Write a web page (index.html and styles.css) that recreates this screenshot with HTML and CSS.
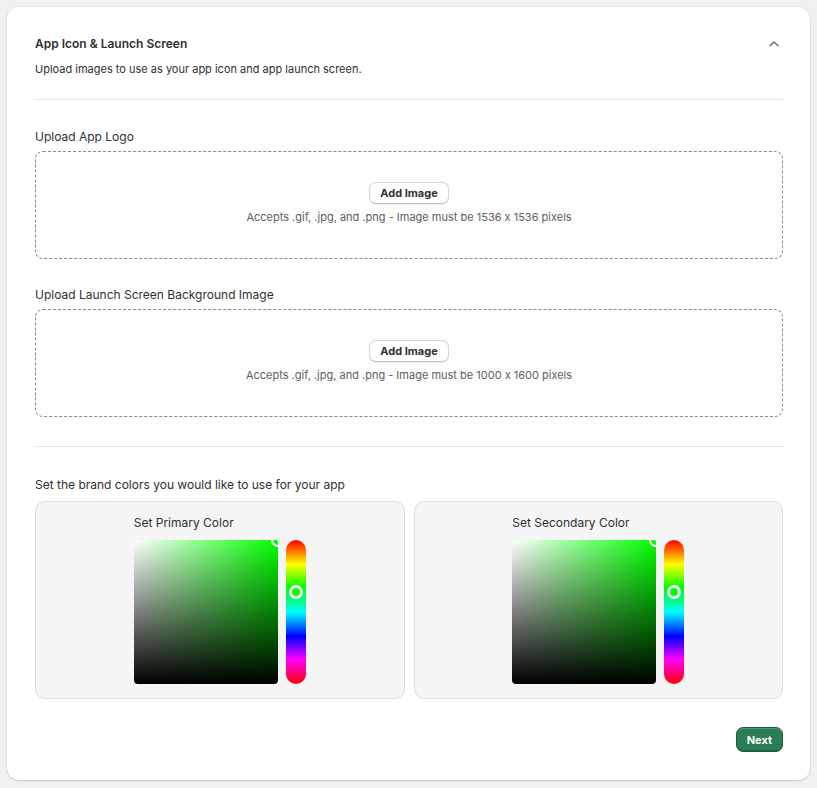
FILE: index.html
```html
<!DOCTYPE html>
<html>
<head>
<meta charset="utf-8">
<link rel="stylesheet" href="styles.css">
</head>
<body>
<div class="card">
  <div class="header">
    <div class="title-row">
      <h2 class="title">App Icon &amp; Launch Screen</h2>
      <svg class="chevron" width="12" height="12" viewBox="0 0 12 12"><path d="M2 7.8 L6 4 L10 7.8" fill="none" stroke="#6b6b6b" stroke-width="1.5" stroke-linecap="round" stroke-linejoin="round"/></svg>
    </div>
    <p class="subtitle">Upload images to use as your app icon and app launch screen.</p>
  </div>

  <div class="section uploads">
    <div class="field">
      <div class="label">Upload App Logo</div>
      <div class="dropzone">
        <button class="btn">Add Image</button>
        <div class="hint">Accepts .gif, .jpg, and .png - Image must be 1536 x 1536 pixels</div>
      </div>
    </div>
    <div class="field">
      <div class="label">Upload Launch Screen Background Image</div>
      <div class="dropzone">
        <button class="btn">Add Image</button>
        <div class="hint">Accepts .gif, .jpg, and .png - Image must be 1000 x 1600 pixels</div>
      </div>
    </div>
  </div>

  <div class="section colors">
    <div class="label">Set the brand colors you would like to use for your app</div>
    <div class="color-grid">
      <div class="color-card">
        <div class="picker">
          <div class="picker-label">Set Primary Color</div>
          <div class="picker-body">
            <div class="sat"><span class="sat-handle"></span></div>
            <div class="hue"><span class="hue-handle"></span></div>
          </div>
        </div>
      </div>
      <div class="color-card">
        <div class="picker">
          <div class="picker-label">Set Secondary Color</div>
          <div class="picker-body">
            <div class="sat"><span class="sat-handle"></span></div>
            <div class="hue"><span class="hue-handle"></span></div>
          </div>
        </div>
      </div>
    </div>
  </div>

  <div class="footer">
    <button class="btn-primary">Next</button>
  </div>
</div>
</body>
</html>
```

FILE: styles.css
```css
* { box-sizing: border-box; }
html, body { margin: 0; }
body {
  background: #f1f1f1;
  padding: 7px 7px 8px 7px;
  font-family: Inter, "Noto Sans", "Liberation Sans", sans-serif;
  font-size: 12px;
  color: #303030;
  line-height: 20px;
  font-feature-settings: "calt" 0;
}
.card {
  background: #ffffff;
  border-radius: 12px;
  box-shadow: 0 1px 0 rgba(0,0,0,0.07), 0 0 0 1px rgba(0,0,0,0.04), 0 1px 3px rgba(0,0,0,0.08);
  padding: 27px 27px 28px 28px;
}
.header {
  padding-bottom: 20px;
  border-bottom: 1px solid #e3e3e3;
}
.title-row {
  display: flex;
  justify-content: space-between;
  align-items: center;
}
.title {
  margin: 0;
  font-size: 12px;
  font-weight: 600;
  line-height: 20px;
}
.chevron { margin-right: 3px; }
.subtitle {
  margin: 5px 0 0 0;
  font-size: 11px;
  line-height: 20px;
}
.uploads {
  padding: 27px 0 29px 0;
  border-bottom: 1px solid #e3e3e3;
  display: flex;
  flex-direction: column;
  gap: 26px;
}
.label { line-height: 20px; margin-bottom: 4px; }
.dropzone {
  border: 1px dashed #8a8a8a;
  border-radius: 8px;
  background: #fdfdfd;
  height: 108px;
  display: flex;
  flex-direction: column;
  align-items: center;
  justify-content: flex-start;
  gap: 5px;
  padding-top: 30px;
}
.btn {
  font-family: inherit;
  font-size: 11px;
  font-weight: 650;
  color: #303030;
  background: #fff;
  border: 1px solid #d4d4d4;
  border-bottom-color: #c2c2c2;
  border-radius: 7px;
  height: 22px;
  padding: 0 10px;
  box-shadow: 0 1px 0 rgba(0,0,0,0.06);
}
.hint {
  font-size: 11px;
  color: #616161;
  line-height: 16px;
}
.colors {
  padding-top: 28px;
}
.colors .label { margin-bottom: 6px; }
.color-grid {
  display: grid;
  grid-template-columns: 1fr 1fr;
  gap: 9px;
}
.color-card {
  background: #f5f5f5;
  border: 1px solid #dcdcdc;
  border-radius: 10px;
  padding: 11px 0 14px 0;
  display: flex;
  justify-content: center;
}
.picker-label {
  line-height: 20px;
  margin-bottom: 7px;
}
.picker-body {
  display: flex;
  gap: 8px;
}
.sat {
  position: relative;
  width: 144px;
  height: 144px;
  border-radius: 2px 2px 4px 4px;
  overflow: hidden;
  background:
    linear-gradient(to bottom, rgba(0,0,0,0), #000),
    linear-gradient(to right, #fff, rgba(255,255,255,0)),
    #00ff00;
}
.sat-handle {
  position: absolute;
  right: -7px;
  top: -7px;
  width: 14px;
  height: 14px;
  border: 2px solid #fff;
  border-radius: 50%;
}
.hue {
  position: relative;
  width: 20px;
  height: 144px;
  border-radius: 10px;
  background: linear-gradient(to bottom, #f00 0%, #ff0 17%, #0f0 33%, #0ff 50%, #00f 67%, #f0f 83%, #f00 100%);
}
.hue-handle {
  position: absolute;
  left: 3px;
  top: 45px;
  width: 14px;
  height: 14px;
  border: 3px solid #fff;
  border-radius: 50%;
  background: #00ff00;
}
.footer {
  display: flex;
  justify-content: flex-end;
  margin-top: 28px;
}
.btn-primary {
  font-family: inherit;
  font-size: 11px;
  font-weight: 650;
  color: #fff;
  background: #2a7d56;
  border: 1px solid #1d5e3f;
  border-radius: 7px;
  height: 25px;
  padding: 0 10px;
  box-shadow: inset 0 1px 0 rgba(255,255,255,0.2), inset 0 -1px 0 rgba(0,0,0,0.2);
}
```
